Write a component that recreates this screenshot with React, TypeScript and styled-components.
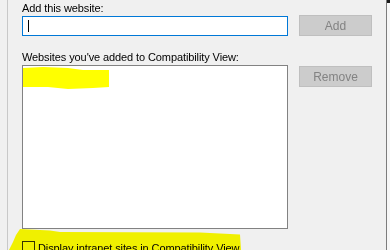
import React from 'react';
import styled, { createGlobalStyle } from 'styled-components';

const Global = createGlobalStyle`
	html, body {
		margin: 0;
		padding: 0;
		background: #f0f0f0;
	}
	body {
		font-family: "Liberation Sans", Arial, sans-serif;
		font-size: 11px;
		color: #000;
	}
`;

const Window = styled.div`
	position: relative;
	width: 390px;
	height: 250px;
	overflow: hidden;
	display: flex;
	background: #f0f0f0;
`;

const Gutter = styled.div`
	width: 7px;
	flex: none;
	background: #f0f0f0;
	border-right: 1px solid #c8c8c8;
`;

const Panel = styled.div`
	flex: none;
	width: 364px;
	padding-left: 14px;
	border-right: 1px solid #7c7c7c;
`;

const Edge = styled.div`
	flex: 1;
	background: #f7f7f7;
	border-top: 3px solid #1a1a1a;
`;

const Label = styled.div<{ $top?: number }>`
	line-height: 15px;
	padding-top: 1px;
	margin-top: ${p => p.$top || 0}px;
	white-space: nowrap;
	letter-spacing: -0.1px;
`;

const Row = styled.div<{ $align: string; $top: number }>`
	display: grid;
	grid-template-columns: 266px 73px;
	column-gap: 11px;
	align-items: ${p => p.$align};
	margin-top: ${p => p.$top}px;
`;

const TextBox = styled.div`
	box-sizing: border-box;
	height: 20px;
	border: 1px solid #0078d7;
	background: #fff;
	padding: 3px 5px;
`;

const Caret = styled.span`
	display: block;
	width: 1px;
	height: 12px;
	background: #000;
`;

const Button = styled.div<{ $top?: number }>`
	box-sizing: border-box;
	height: 21px;
	margin-top: ${p => p.$top || 0}px;
	background: #cccccc;
	border: 1px solid #bfbfbf;
	color: #838383;
	font-size: 12px;
	display: flex;
	align-items: center;
	justify-content: center;
	line-height: 1;
`;

const ListBox = styled.div`
	position: relative;
	box-sizing: border-box;
	height: 164px;
	border: 1px solid #828282;
	background: #fff;
`;

const Mark = styled.svg`
	position: absolute;
	left: 0;
	top: 1px;
`;

const CheckRow = styled.div`
	display: flex;
	align-items: flex-start;
	gap: 3px;
	margin-top: 12px;
	line-height: 15px;
	white-space: nowrap;
	letter-spacing: -0.1px;
`;

const Box = styled.span`
	box-sizing: border-box;
	width: 13px;
	height: 13px;
	flex: none;
	border: 1px solid #333;
`;

const Highlight = styled.svg`
	position: absolute;
	left: 0;
	top: 225px;
	pointer-events: none;
	mix-blend-mode: multiply;
`;

const App = () => {
	return (
		<>
			<Global />
			<Window>
				<Gutter />
				<Panel>
					<Label>Add this website:</Label>
					<Row $align="end" $top={-1}>
						<TextBox>
							<Caret />
						</TextBox>
						<Button>Add</Button>
					</Row>
					<Label $top={13}>Websites you've added to Compatibility View:</Label>
					<Row $align="start" $top={0}>
						<ListBox>
							<Mark width="90" height="24" viewBox="0 0 90 24">
								<path
									d="M0 1 L20 0 L45 1 L60 3 L86 3 L86 20 L70 21 L45 22 L25 20 L0 20 Z"
									fill="#ffff00"
								/>
							</Mark>
						</ListBox>
						<Button $top={1}>Remove</Button>
					</Row>
					<CheckRow>
						<Box />
						<span>Display intranet sites in Compatibility View</span>
					</CheckRow>
				</Panel>
				<Edge />
				<Highlight width="250" height="25" viewBox="0 0 250 25">
					<path
						d="M20 4 L50 5.5 L60 7 L200 7.5 L240 9.5 L241 25 L9 25 L13 17 L16 10 Z"
						fill="#ffff00"
					/>
				</Highlight>
			</Window>
		</>
	);
};

export default App;
